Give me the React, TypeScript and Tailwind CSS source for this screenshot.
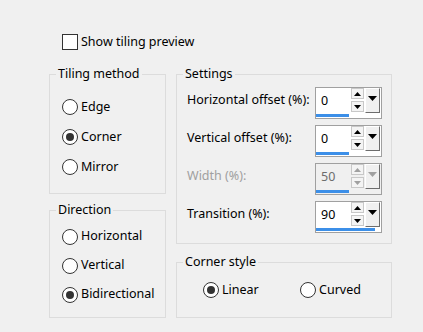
import React from "react";

const FONT = { fontFamily: '"Noto Sans", "Open Sans", sans-serif' };

function Radio({ checked }: { checked?: boolean }) {
    return (
        <span className="w-[16px] h-[16px] rounded-full border border-[#333] bg-white flex items-center justify-center shrink-0">
            {checked && <span className="w-[8px] h-[8px] rounded-full bg-[#333]" />}
        </span>
    );
}

function RadioRow({ label, checked, h }: { label: string; checked?: boolean; h: string }) {
    return (
        <div className={`${h} flex items-center gap-[3px]`}>
            <Radio checked={checked} />
            <span>{label}</span>
        </div>
    );
}

// group box: the caption sits on the top border line
function Group({ title, className, children }: { title: string; className: string; children: React.ReactNode }) {
    return (
        <div className="border border-[#dcdcdc] mt-[8px]">
            <div className="-mt-[9px] ml-[6px] px-[2px] w-fit bg-[#f0f0f0] leading-[16px]">{title}</div>
            <div className={className}>{children}</div>
        </div>
    );
}

function Arrow({ up, color }: { up?: boolean; color: string }) {
    return (
        <svg width="7" height="4" viewBox="0 0 7 4">
            <path d={up ? "M0 4 L3.5 0 L7 4 Z" : "M0 0 L7 0 L3.5 4 Z"} fill={color} />
        </svg>
    );
}

function Spin({ label, value, pct, disabled }: { label: string; value: string; pct: number; disabled?: boolean }) {
    const arrow = disabled ? "#a0a0a0" : "#000";
    return (
        <div className="flex items-start">
            <div className={`w-[128px] h-[26px] flex items-center ${disabled ? "text-[#a0a0a0]" : ""}`}>{label}</div>
            <div className={`w-[67px] h-[32px] border border-[#a0a0a0] flex flex-col ${disabled ? "bg-[#f0f0f0]" : "bg-white"}`}>
                <div className="h-[26px] flex">
                    <div className={`w-[35px] flex items-center pl-[5px] ${disabled ? "text-[#6d6d6d]" : ""}`}>{value}</div>
                    <div className="flex flex-col gap-[2px] w-[13px]">
                        <div className="h-[11px] border border-[#c8c8c8] bg-[#f4f4f4] flex items-center justify-center">
                            <Arrow up color={arrow} />
                        </div>
                        <div className="h-[11px] border border-[#c8c8c8] bg-[#f4f4f4] flex items-center justify-center">
                            <Arrow color={arrow} />
                        </div>
                    </div>
                    <div className="ml-[1px] w-[15px] h-[25px] bg-[#f0f0f0] border-t border-l border-t-white border-l-white border-r border-b border-r-[#6d6d6d] border-b-[#6d6d6d] flex justify-center pt-[7px]">
                        <svg width="9" height="5" viewBox="0 0 9 5">
                            <path d="M0 0 L9 0 L4.5 5 Z" fill={arrow} />
                        </svg>
                    </div>
                </div>
                <div className="h-[3px] bg-[#3c8fe8]" style={{ width: `${pct}%` }} />
            </div>
        </div>
    );
}

export default function App() {
    return (
        <div className="w-[423px] h-[332px] bg-[#f0f0f0] text-black text-[12.5px] pt-[34px] pl-[49px]" style={FONT}>
            {/* Preview checkbox */}
            <div className="ml-[13px] h-[16px] flex items-center gap-[3px]">
                <span className="w-[16px] h-[16px] border border-[#333] bg-white shrink-0" />
                <span>Show tiling preview</span>
            </div>

            <div className="flex gap-[10px] mt-[16px]">
                {/* Left column */}
                <div className="w-[117px] flex flex-col gap-[8px]">
                    <Group title="Tiling method" className="pl-[12px] pt-[10px] pb-[11px]">
                        <RadioRow h="h-[30px]" label="Edge" />
                        <RadioRow h="h-[30px]" label="Corner" checked />
                        <RadioRow h="h-[30px]" label="Mirror" />
                    </Group>
                    <Group title="Direction" className="pl-[12px] pt-[4px] pb-[8px]">
                        <RadioRow h="h-[29px]" label="Horizontal" />
                        <RadioRow h="h-[29px]" label="Vertical" />
                        <RadioRow h="h-[29px]" label="Bidirectional" checked />
                    </Group>
                </div>

                {/* Right column */}
                <div className="w-[216px] flex flex-col gap-[10px]">
                    <Group title="Settings" className="pl-[10px] pt-[5px] pb-[10px] flex flex-col gap-[6px]">
                        <Spin label="Horizontal offset (%):" value="0" pct={50} />
                        <Spin label="Vertical offset (%):" value="0" pct={50} />
                        <Spin label="Width (%):" value="50" pct={50} disabled />
                        <Spin label="Transition (%):" value="90" pct={90} />
                    </Group>
                    <Group title="Corner style" className="pl-[26px] pt-[5px] pb-[12px]">
                        <div className="flex">
                            <div className="w-[97px]">
                                <RadioRow h="h-[30px]" label="Linear" checked />
                            </div>
                            <RadioRow h="h-[30px]" label="Curved" />
                        </div>
                    </Group>
                </div>
            </div>
        </div>
    );
}
